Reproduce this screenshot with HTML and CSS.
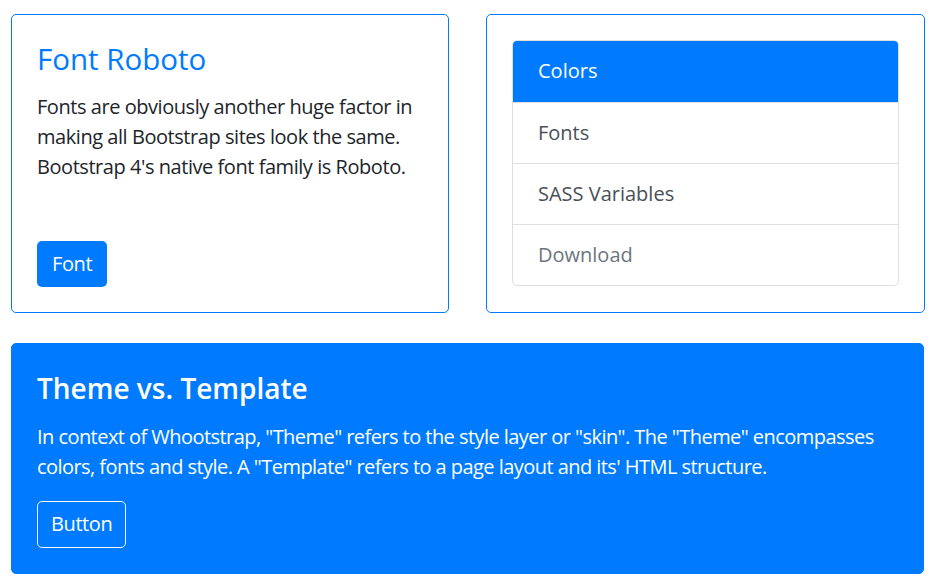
FILE: index.html
```html
<!DOCTYPE html>
<html>
<head>
<meta charset="utf-8">
<link rel="stylesheet" href="styles.css">
</head>
<body>
<div class="page">
  <div class="row">
    <div class="card card-outline">
      <div class="card-body flex-col">
        <h3 class="title-primary">Font Roboto</h3>
        <p class="text">Fonts are obviously another huge factor in making all Bootstrap sites look the same. Bootstrap 4's native font family is Roboto.</p>
        <a class="btn btn-primary">Font</a>
      </div>
    </div>
    <div class="card card-outline">
      <div class="card-body card-body-list">
        <div class="list-group">
          <a class="list-item active">Colors</a>
          <a class="list-item">Fonts</a>
          <a class="list-item">SASS Variables</a>
          <a class="list-item disabled">Download</a>
        </div>
      </div>
    </div>
  </div>
  <div class="card card-primary">
    <div class="card-body">
      <h4 class="title-white">Theme vs. Template</h4>
      <p class="text text-white">In context of Whootstrap, "Theme" refers to the style layer or "skin". The "Theme" encompasses colors, fonts and style. A "Template" refers to a page layout and its' HTML structure.</p>
      <a class="btn btn-outline-light">Button</a>
    </div>
  </div>
</div>
</body>
</html>
```
FILE: styles.css
```css
* { box-sizing: border-box; }
html, body { margin: 0; padding: 0; background: #fff; }
body {
  font-family: "Open Sans", "Noto Sans", sans-serif;
  font-size: 20px;
  line-height: 30px;
  color: #212529;
}
.page {
  padding: 14px 12px 0 11px;
  display: flex;
  flex-direction: column;
  gap: 30px;
}
.row {
  display: grid;
  grid-template-columns: 438px 439px;
  column-gap: 37px;
}
.card {
  border-radius: 5px;
  border: 1px solid #007bff;
  background: #fff;
}
.card-primary {
  background: #007bff;
  color: #fff;
  height: 231px;
}
.card-body {
  padding: 25px;
  height: 100%;
}
.card-body-list { padding-bottom: 26px; }
.flex-col {
  display: flex;
  flex-direction: column;
  align-items: flex-start;
}
h3, h4, p { margin: 0; }
.title-primary {
  color: #007bff;
  font-size: 29.5px;
  line-height: 37px;
  font-weight: 500;
  margin-bottom: 15px;
}
.title-white {
  color: #fff;
  font-size: 28px;
  line-height: 38px;
  font-weight: 600;
  margin-bottom: 15px;
}
.text { letter-spacing: -0.45px; }
.text-white { color: #fff; margin-bottom: 19px; letter-spacing: -0.55px; }
.btn {
  display: inline-block;
  padding: 7px 14px;
  border-radius: 5px;
  border: 1px solid transparent;
  font-size: 20px;
  line-height: 30px;
  letter-spacing: -0.4px;
  cursor: pointer;
}
.btn-primary {
  background: #007bff;
  color: #fff;
  margin-top: auto;
}
.btn-outline-light {
  border-color: #f8f9fa;
  color: #fff;
  padding: 7px 13px 8px;
}
.list-group {
  display: flex;
  flex-direction: column;
  border: 1px solid rgba(0,0,0,0.125);
  border-radius: 5px;
  overflow: hidden;
}
.list-item {
  display: block;
  padding: 15px 25px;
  color: #495057;
  border-top: 1px solid rgba(0,0,0,0.125);
}
.list-item:first-child { border-top: none; }
.list-item.active {
  background: #007bff;
  color: #fff;
  margin: -1px -1px 0;
  padding: 16px 26px 16px;
}
.list-item.disabled { color: #6c757d; }
```
